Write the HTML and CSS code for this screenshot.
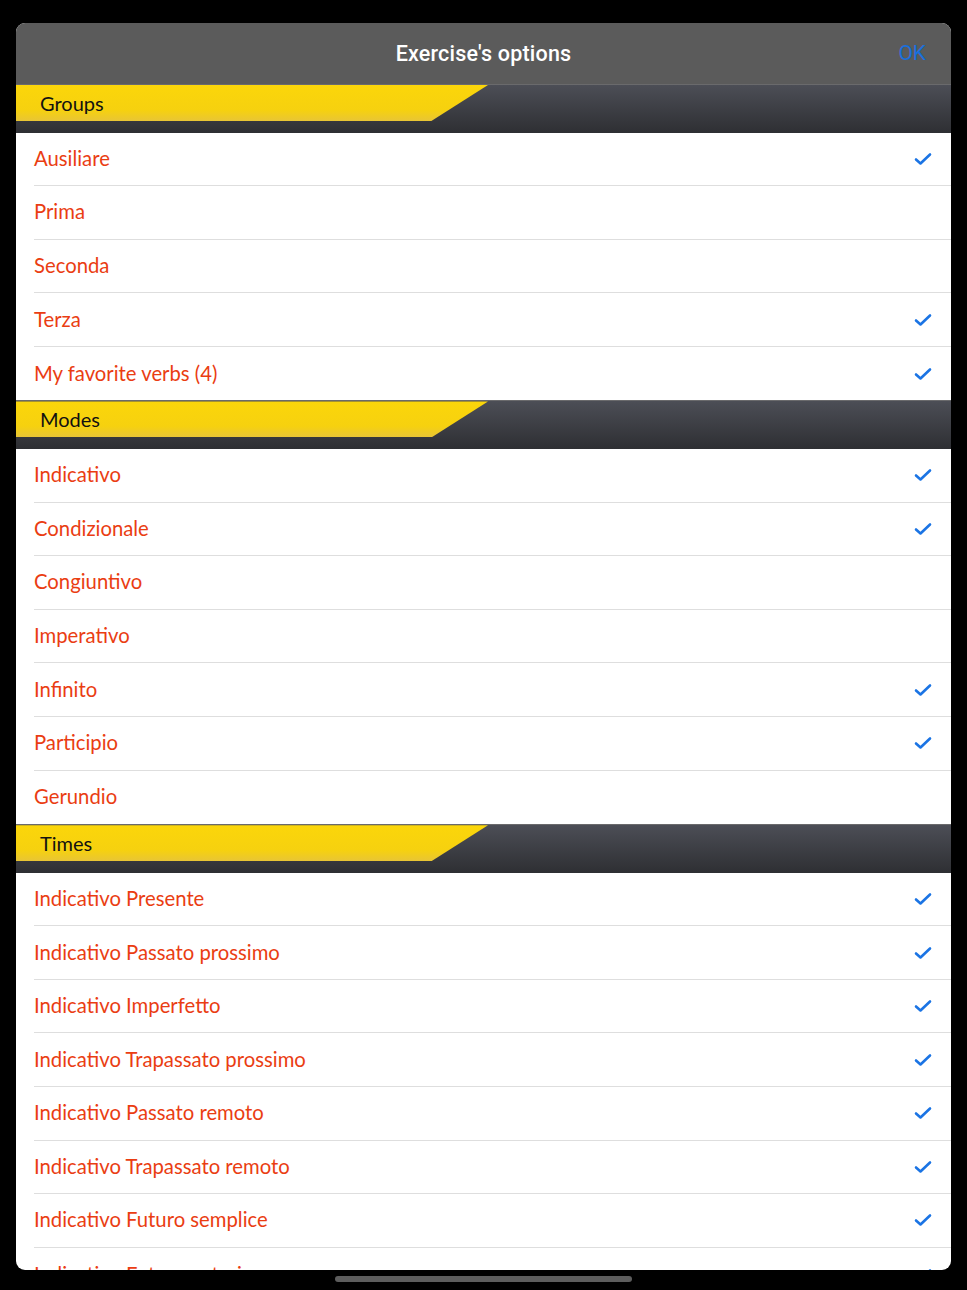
FILE: index.html
```html
<!DOCTYPE html>
<html lang="en">
<head>
    <meta charset="UTF-8">
    <meta name="viewport" content="width=device-width, initial-scale=1.0">
    <title>Exercise's options</title>
    <link rel="stylesheet" href="styles.css">
</head>
<body>
    <div class="sheet">
        <header class="navbar">
            <span class="navbar-title">Exercise's options</span>
            <button class="navbar-ok">OK</button>
        </header>
        <div class="options" id="options"></div>
    </div>
    <div class="home-bar"></div>

    <script>
        const sections = [
            { title: 'Groups', rows: [
                ['Ausiliare', true], ['Prima', false], ['Seconda', false],
                ['Terza', true], ['My favorite verbs (4)', true]
            ]},
            { title: 'Modes', rows: [
                ['Indicativo', true], ['Condizionale', true], ['Congiuntivo', false],
                ['Imperativo', false], ['Infinito', true], ['Participio', true],
                ['Gerundio', false]
            ]},
            { title: 'Times', rows: [
                ['Indicativo Presente', true], ['Indicativo Passato prossimo', true],
                ['Indicativo Imperfetto', true], ['Indicativo Trapassato prossimo', true],
                ['Indicativo Passato remoto', true], ['Indicativo Trapassato remoto', true],
                ['Indicativo Futuro semplice', true], ['Indicativo Futuro anteriore', true]
            ]}
        ];

        const check = '<svg class="check" width="18" height="14" viewBox="0 0 18 14"><path d="M2 7.5 L6.5 11.5 L16 2.5" fill="none" stroke="#1b74e4" stroke-width="2.6" stroke-linecap="round" stroke-linejoin="round"/></svg>';

        const options = document.getElementById('options');
        sections.forEach(section => {
            const head = document.createElement('div');
            head.className = 'section-head';
            head.innerHTML = `<div class="section-band"><span>${section.title}</span></div>`;
            options.appendChild(head);

            const list = document.createElement('ul');
            list.className = 'rows';
            section.rows.forEach(([label, on]) => {
                const li = document.createElement('li');
                li.className = 'row';
                li.innerHTML = `<span class="row-label">${label}</span>${on ? check : ''}`;
                list.appendChild(li);
            });
            options.appendChild(list);
        });
    </script>
</body>
</html>
```

FILE: styles.css
```css
html, body {
    margin: 0;
    padding: 0;
    background-color: #000;
    height: 100%;
    overflow: hidden;
}
body {
    font-family: Lato, "Open Sans", sans-serif;
    padding-top: 23px;
}
.sheet {
    margin: 0 16px;
    height: 1247px;
    background-color: #fff;
    border-radius: 9px;
    overflow: hidden;
}
.navbar {
    height: 61px;
    background-color: #5b5b5b;
    display: flex;
    align-items: center;
    justify-content: center;
    position: relative;
}
.navbar-title {
    color: #fff;
    font-family: Roboto, sans-serif;
    font-weight: 500;
    font-size: 21.5px;
    letter-spacing: 0.2px;
}
.navbar-ok {
    position: absolute;
    right: 25px;
    top: 18px;
    background: none;
    border: none;
    padding: 0;
    color: #1a6fdc;
    font-family: Roboto, sans-serif;
    font-size: 21px;
}
.section-head {
    height: 48.5px;
    background: linear-gradient(#4c4e56, #2e2f33);
    border-top: 1px solid #6a6a6c;
    box-sizing: border-box;
}
.section-band {
    height: 36px;
    width: 472px;
    background: linear-gradient(#fbd60a 0%, #f6d10f 70%, #e8c535 100%);
    clip-path: polygon(0 0, 100% 0, 88% 100%, 0 100%);
    display: flex;
    align-items: center;
    padding-left: 24px;
    box-sizing: border-box;
}
.section-band span {
    font-size: 20px;
    color: #111;
}
.rows {
    list-style: none;
    margin: 0;
    padding: 0;
}
.row {
    height: 53.6px;
    margin-left: 18px;
    padding-right: 19px;
    padding-bottom: 2px;
    box-sizing: border-box;
    border-bottom: 1px solid #dedede;
    display: flex;
    align-items: center;
    justify-content: space-between;
}
.row:last-child {
    border-bottom: none;
}
.row-label {
    color: #ea3d12;
    font-size: 20.3px;
}
.check {
    display: block;
    margin-top: 2px;
}
.home-bar {
    width: 297px;
    height: 6px;
    margin: 6px auto 0;
    border-radius: 3px;
    background-color: #5d5d5d;
}
```
